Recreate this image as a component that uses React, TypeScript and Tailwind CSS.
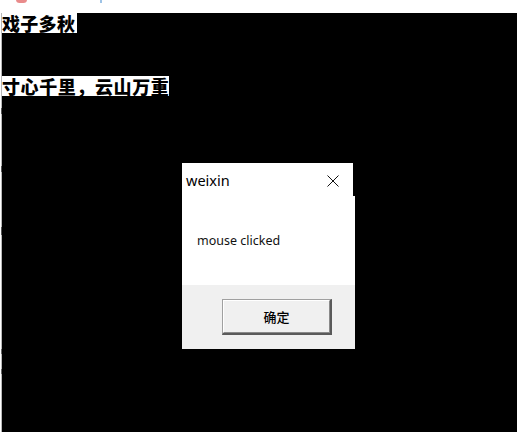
import React from "react";

export default function App() {
  return (
    <div className="relative w-[517px] h-[432px] bg-white overflow-hidden">
      {/* top strip of background window */}
      <div className="relative h-[13px] bg-white">
        <div className="absolute left-[16px] top-[-4px] w-[11px] h-[7px] rounded-full bg-[#e05a5a] opacity-70" />
        <div className="absolute left-[100px] top-0 w-[2px] h-[3px] bg-[#9ec3e6]" />
      </div>
      <div className="flex h-[419px]">
        <div className="flex w-[2px] shrink-0">
          <div className="w-[1px] bg-white" />
          <div className="w-[1px] bg-[#b8b8b8] flex flex-col">
            <div className="h-[95px]" />
            <div className="h-[6px] bg-[#555]" />
            <div className="h-[52px]" />
            <div className="h-[6px] bg-[#555]" />
            <div className="h-[55px]" />
            <div className="h-[8px] bg-[#555]" />
            <div className="h-[114px]" />
            <div className="h-[5px] bg-[#666]" />
            <div className="h-[15px]" />
            <div className="h-[5px] bg-[#666]" />
          </div>
        </div>
        <div
          className="flex-1 bg-black flex flex-col items-start"
          style={{ fontFamily: '"Noto Sans CJK SC", sans-serif' }}
        >
          <span className="bg-white text-black font-black text-[18px] leading-[20px] h-[20px] pr-[2px] tracking-[0.3px]">
            戏子多秋
          </span>
          <span className="mt-[43px] bg-white text-black font-black text-[18px] leading-[20px] h-[20px] tracking-[0.6px]">
            寸心千里，云山万重
          </span>
        </div>
      </div>

      {/* message box window */}
      <div className="absolute left-[182px] top-[163px] w-[173px] h-[186px] flex flex-col">
        <div
          className="w-[171px] h-[33px] bg-white flex items-center justify-between pl-[4px] pr-[14px]"
          style={{ fontFamily: '"Noto Sans", "Open Sans", sans-serif' }}
        >
          <span className="text-[14.5px] text-black leading-none mt-[1px]">weixin</span>
          <svg width="12" height="12" viewBox="0 0 12 12" className="mt-[2px]">
            <path d="M0.5 0.5 L11.5 11.5 M11.5 0.5 L0.5 11.5" stroke="#111" strokeWidth="1" fill="none" />
          </svg>
        </div>
        <div
          className="flex-1 bg-white flex items-start pl-[15px] pt-[39px]"
          style={{ fontFamily: '"Noto Sans", "Open Sans", sans-serif' }}
        >
          <span className="text-[12.5px] text-[#111] leading-none">mouse clicked</span>
        </div>
        <div className="h-[64px] bg-[#f0f0f0] flex items-start justify-end pr-[23px] pt-[14px]">
          <div className="w-[110px] h-[36px] border-t border-l border-r-2 border-b-2 border-t-[#a0a0a0] border-l-[#a0a0a0] border-b-[#5a5a5a] border-r-[#5a5a5a]">
            <div
              className="w-full h-full border border-t-white border-l-white border-b-[#8a8a8a] border-r-[#8a8a8a] bg-[#f0f0f0] flex items-center justify-center"
              style={{ fontFamily: '"Noto Sans CJK SC", sans-serif' }}
            >
              <span className="text-[13px] text-black font-medium leading-none">确定</span>
            </div>
          </div>
        </div>
      </div>
    </div>
  );
}
